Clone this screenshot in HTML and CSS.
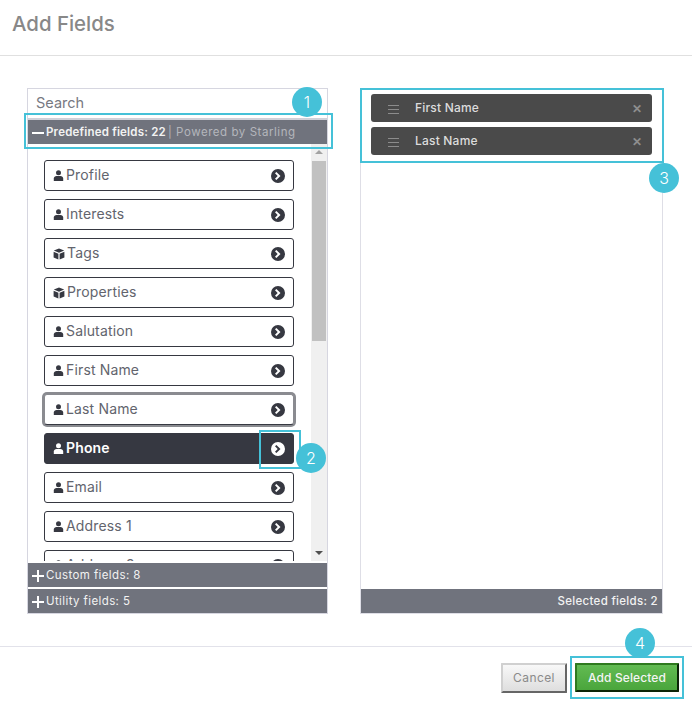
FILE: index.html
```html
<!DOCTYPE html>
<html lang="en">
<head>
    <meta charset="UTF-8">
    <title>Add Fields</title>
    <link rel="stylesheet" href="styles.css">
</head>
<body>
    <svg class="icon-defs" width="0" height="0">
        <symbol id="user" viewBox="0 0 10 11">
            <circle cx="5" cy="2.8" r="2.5"/>
            <path d="M0.3 11V8.6C0.3 6.9 1.6 6 3 6H7C8.4 6 9.7 6.9 9.7 8.6V11Z"/>
        </symbol>
        <symbol id="cube" viewBox="0 0 12 12">
            <path d="M6 0.4L11.2 2.6L6 4.8L0.8 2.6Z"/>
            <path d="M0.6 3.7L5.4 5.8V11.6L0.6 9.4Z"/>
            <path d="M11.4 3.7L6.6 5.8V11.6L11.4 9.4Z"/>
        </symbol>
        <symbol id="go" viewBox="0 0 14 14">
            <path fill-rule="evenodd" d="M7 0a7 7 0 1 0 0 14A7 7 0 0 0 7 0ZM5.4 2.9L9.5 7L5.4 11.1L4 9.7L6.7 7L4 4.3Z"/>
        </symbol>
    </svg>

    <header class="modal-head">
        <h1>Add Fields</h1>
    </header>

    <main class="modal-body">
        <section class="picker">
            <div class="search">Search</div>
            <div class="group-bar group-open">
                <span class="minus"></span>
                <b>Predefined fields: 22</b>
                <span class="powered">| Powered by Starling</span>
            </div>
            <div class="list-wrap">
                <div class="field-list">
                    <div class="field"><svg class="ico"><use href="#user"/></svg><span>Profile</span><svg class="go"><use href="#go"/></svg></div>
                    <div class="field"><svg class="ico"><use href="#user"/></svg><span>Interests</span><svg class="go"><use href="#go"/></svg></div>
                    <div class="field"><svg class="ico ico-cube"><use href="#cube"/></svg><span>Tags</span><svg class="go"><use href="#go"/></svg></div>
                    <div class="field"><svg class="ico ico-cube"><use href="#cube"/></svg><span>Properties</span><svg class="go"><use href="#go"/></svg></div>
                    <div class="field"><svg class="ico"><use href="#user"/></svg><span>Salutation</span><svg class="go"><use href="#go"/></svg></div>
                    <div class="field"><svg class="ico"><use href="#user"/></svg><span>First Name</span><svg class="go"><use href="#go"/></svg></div>
                    <div class="field field-focus"><svg class="ico"><use href="#user"/></svg><span>Last Name</span><svg class="go"><use href="#go"/></svg></div>
                    <div class="field field-active"><svg class="ico"><use href="#user"/></svg><span>Phone</span><svg class="go"><use href="#go"/></svg></div>
                    <div class="field"><svg class="ico"><use href="#user"/></svg><span>Email</span><svg class="go"><use href="#go"/></svg></div>
                    <div class="field"><svg class="ico"><use href="#user"/></svg><span>Address 1</span><svg class="go"><use href="#go"/></svg></div>
                    <div class="field"><svg class="ico"><use href="#user"/></svg><span>Address 2</span><svg class="go"><use href="#go"/></svg></div>
                </div>
                <div class="scrollbar">
                    <div class="arrow-up"></div>
                    <div class="thumb"></div>
                    <div class="arrow-down"></div>
                </div>
            </div>
            <div class="group-bar"><span class="plus"></span>Custom fields: 8</div>
            <div class="group-bar"><span class="plus"></span>Utility fields: 5</div>
        </section>

        <section class="selected">
            <div class="chips">
                <div class="chip">
                    <span class="grip"></span>
                    <span class="chip-name">First Name</span>
                    <span class="chip-x">&#10005;</span>
                </div>
                <div class="chip">
                    <span class="grip"></span>
                    <span class="chip-name">Last Name</span>
                    <span class="chip-x">&#10005;</span>
                </div>
            </div>
            <div class="selected-count">Selected fields: 2</div>
        </section>
    </main>

    <footer class="modal-foot">
        <button class="btn-cancel">Cancel</button>
        <button class="btn-add">Add Selected</button>
    </footer>

    <!-- help callouts over the dialog -->
    <div class="callout callout-1"></div>
    <div class="callout callout-2"></div>
    <div class="callout callout-3"></div>
    <div class="callout callout-4"></div>
    <div class="badge badge-1">1</div>
    <div class="badge badge-2">2</div>
    <div class="badge badge-3">3</div>
    <div class="badge badge-4">4</div>
</body>
</html>
```

FILE: styles.css
```css
* {
    box-sizing: border-box;
}
body {
    margin: 0;
    height: 702px;
    overflow: hidden;
    position: relative;
    background: white;
    font-family: Inter, "Open Sans", sans-serif;
    color: #555761;
}
.icon-defs {
    position: absolute;
}
.modal-head {
    height: 56px;
    padding: 12px 12px 0;
    border-bottom: 1px solid #e0e0e0;
}
.modal-head h1 {
    margin: 0;
    font-size: 20.4px;
    line-height: 24px;
    font-weight: 500;
    color: #888;
}
.modal-body {
    height: 590px;
    padding: 32px 28px 0 27px;
    display: flex;
    gap: 32px;
    align-items: flex-start;
}
.picker {
    width: 301px;
    height: 526px;
    border: 1px solid #d6d6e0;
    display: flex;
    flex-direction: column;
}
.search {
    height: 31px;
    padding: 5px 8px 0;
    font-size: 14.5px;
    line-height: 17px;
    color: #777982;
    border-bottom: 2px solid #d0d0d8;
}
.group-bar {
    height: 24px;
    flex: none;
    background: #70737d;
    color: #f2f2f2;
    font-size: 11.5px;
    letter-spacing: 0.4px;
    line-height: 24px;
    display: flex;
    align-items: center;
    margin-bottom: 2px;
}
.group-bar:last-child {
    margin-bottom: 0;
}
.group-bar b {
    font-weight: 600;
    letter-spacing: 0.2px;
}
.group-open {
    margin-bottom: 0;
}
.powered {
    margin-left: 2px;
    color: #b4b6bc;
    letter-spacing: 0.55px;
}
.minus {
    width: 12px;
    height: 2px;
    margin: 2px 2px 0 4px;
    background: white;
}
.plus {
    width: 12px;
    height: 12px;
    margin: 2px 2px 0 4px;
    background: linear-gradient(white, white) center / 12px 2px no-repeat,
                linear-gradient(white, white) center / 2px 12px no-repeat;
}
.list-wrap {
    flex: 1;
    min-height: 0;
    display: flex;
    margin-bottom: 2px;
    overflow: hidden;
}
.field-list {
    flex: 1;
    padding: 16px 0 0 16px;
    overflow: hidden;
}
.field {
    width: 250px;
    height: 31px;
    margin-bottom: 8px;
    padding: 0 8px;
    display: flex;
    align-items: center;
    background: white;
    border: 1px solid #363841;
    border-radius: 3px;
    font-size: 14px;
    letter-spacing: 0.15px;
    color: #62646d;
}
.field span {
    flex: 1;
    margin-top: -2px;
}
.ico {
    width: 11px;
    height: 11px;
    margin-right: 2px;
    fill: #363841;
}
.ico-cube {
    width: 12px;
    height: 12px;
}
.go {
    width: 14px;
    height: 14px;
    fill: #363841;
}
.field-focus {
    border-color: #8a8b90 #8a8b90 #363841;
    box-shadow: 0 0 0 2px #8a8b90;
}
.field-active {
    background: #363841;
    color: white;
    font-weight: 600;
}
.field-active .ico, .field-active .go {
    fill: white;
}
.scrollbar {
    width: 16px;
    background: #f0f0f0;
    display: flex;
    flex-direction: column;
    align-items: center;
}
.arrow-up {
    margin: 6px 0 7px;
    border: 4px solid transparent;
    border-top: 0;
    border-bottom: 4px solid #a3a3a3;
}
.thumb {
    width: 14px;
    height: 180px;
    background: #c1c1c1;
}
.arrow-down {
    margin-top: auto;
    margin-bottom: 6px;
    border: 4px solid transparent;
    border-bottom: 0;
    border-top: 4px solid #505050;
}
.selected {
    width: 303px;
    height: 526px;
    border: 1px solid #dedee6;
    display: flex;
    flex-direction: column;
}
.chips {
    flex: 1;
    padding: 5px 10px 0;
    display: flex;
    flex-direction: column;
    gap: 5px;
}
.chip {
    height: 28px;
    padding: 0 10px 0 17px;
    display: flex;
    align-items: center;
    background: #4a4a4a;
    border-radius: 3px;
    color: #dcdcdc;
    font-size: 12px;
    letter-spacing: 0.2px;
    font-weight: 500;
}
.grip {
    width: 11px;
    height: 9px;
    margin-top: 2px;
    margin-right: 16px;
    background: repeating-linear-gradient(#8c8c8c 0, #8c8c8c 1px, transparent 1px, transparent 4px);
}
.chip-name {
    flex: 1;
    margin-top: -1px;
}
.chip-x {
    color: #8e8e8e;
    font-size: 12px;
    font-weight: 700;
    margin-top: 1px;
}
.selected-count {
    height: 24px;
    padding-right: 4px;
    background: #70737d;
    color: #f2f2f2;
    font-size: 11.5px;
    letter-spacing: 0.3px;
    font-weight: 500;
    line-height: 24px;
    text-align: right;
}
.modal-foot {
    height: 56px;
    padding: 16px 13px 0 0;
    border-top: 1px solid #e2e2ea;
    display: flex;
    justify-content: flex-end;
    align-items: flex-start;
    gap: 8px;
}
.modal-foot button {
    font-family: inherit;
    font-size: 12px;
    padding: 0 0 1px;
    border-radius: 1px;
    cursor: pointer;
}
.btn-cancel {
    width: 66px;
    height: 30px;
    color: #8a8a8a;
    letter-spacing: 0.4px;
    background: linear-gradient(#f8f8f8, #dedede);
    border: 2px solid;
    border-color: #d0d0d0 #666 #666 #d0d0d0;
}
.btn-add {
    width: 104px;
    height: 29px;
    color: #f4f4f4;
    font-weight: 500;
    letter-spacing: 0.1px;
    background: linear-gradient(#62bb52, #4aa53c);
    border: 2px solid;
    border-color: #2f7a1f #0c2408 #0c2408 #2f7a1f;
}
.callout {
    position: absolute;
    border: 2px solid #45c1d8;
}
.callout-1 {
    left: 24px;
    top: 113px;
    width: 309px;
    height: 36px;
}
.callout-2 {
    left: 259px;
    top: 430px;
    width: 42px;
    height: 39px;
}
.callout-3 {
    left: 360px;
    top: 88px;
    width: 304px;
    height: 75px;
}
.callout-4 {
    left: 570px;
    top: 656px;
    width: 114px;
    height: 43px;
}
.badge {
    position: absolute;
    width: 30px;
    height: 30px;
    border-radius: 50%;
    background: #45c1d8;
    color: white;
    font-size: 16px;
    font-weight: 300;
    line-height: 30px;
    text-align: center;
}
.badge-1 {
    left: 292px;
    top: 87px;
}
.badge-2 {
    left: 296px;
    top: 443px;
}
.badge-3 {
    left: 649px;
    top: 163px;
}
.badge-4 {
    left: 625px;
    top: 628px;
}
```
